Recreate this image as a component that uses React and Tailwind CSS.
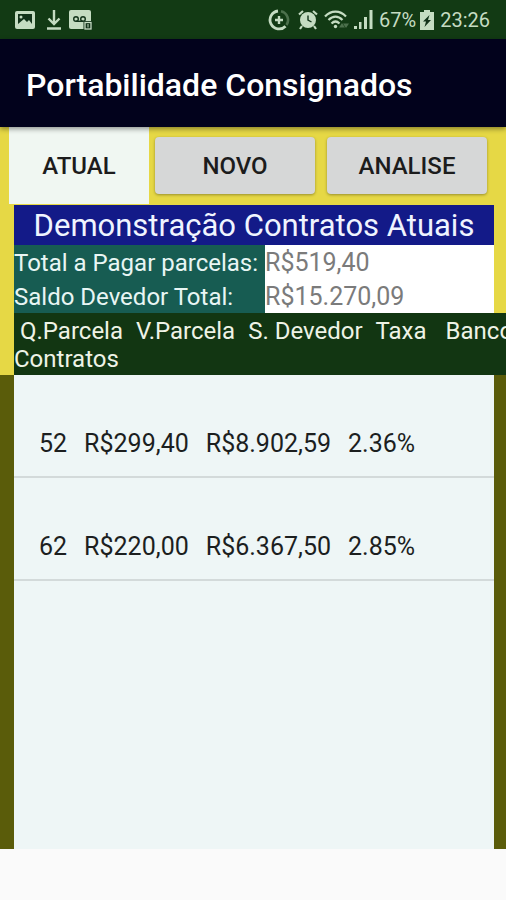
const contracts = [
  { id: 1, quantity: "52", installment: "R$299,40", balance: "R$8.902,59", rate: "2.36%" },
  { id: 2, quantity: "62", installment: "R$220,00", balance: "R$6.367,50", rate: "2.85%" },
]

const totals = [
  { label: "Total a Pagar parcelas:", value: "R$519,40" },
  { label: "Saldo Devedor Total:", value: "R$15.270,09" },
]

const PictureIcon = () => (
  <svg width="20" height="20" viewBox="0 0 20 20" aria-hidden="true">
    <rect x="0" y="1" width="20" height="18" rx="2" fill="#c5dcc2" />
    <path d="M3 4h14v10l-3-4-2 2-3-3-6 5z" fill="#12331a" />
    <circle cx="6" cy="7" r="1.5" fill="#c5dcc2" />
  </svg>
)

const DownloadIcon = () => (
  <svg width="14" height="20" viewBox="0 0 14 20" fill="none" stroke="#c5dcc2" strokeWidth="2.4" aria-hidden="true">
    <path d="M7 0v14M1.5 8.5 7 14l5.5-5.5M0 18.5h14" />
  </svg>
)

const VoicemailIcon = () => (
  <svg width="24" height="20" viewBox="0 0 24 20" aria-hidden="true">
    <rect x="0" y="0" width="22" height="19" rx="2" fill="#c5dcc2" />
    <g fill="none" stroke="#12331a" strokeWidth="1.4">
      <circle cx="7" cy="9" r="2.3" />
      <circle cx="14" cy="9" r="2.3" />
      <path d="M7 11.3h7" />
    </g>
    <rect x="14.5" y="11" width="9" height="9" rx="1" fill="#12331a" />
    <rect x="16" y="12.5" width="6" height="6.5" fill="none" stroke="#c5dcc2" strokeWidth="1.3" />
    <path d="M19 14v3.5" stroke="#c5dcc2" />
  </svg>
)

const DataSaverIcon = () => (
  <svg width="22" height="22" viewBox="0 0 22 22" fill="none" aria-hidden="true">
    <path d="M13 2.2A9 9 0 0 1 18.5 16" stroke="#4c704c" strokeWidth="2.6" />
    <path d="M10 2A9 9 0 1 0 17.5 17.2" stroke="#c5dcc2" strokeWidth="2.8" />
    <path d="M11 7v8M7 11h8" stroke="#c5dcc2" strokeWidth="2.4" />
  </svg>
)

const AlarmIcon = () => (
  <svg width="20" height="21" viewBox="0 0 20 21" fill="none" aria-hidden="true">
    <circle cx="10" cy="11" r="8" fill="#c5dcc2" />
    <path d="M1 5.5 5 2M19 5.5 15 2M4 17l-2 3M16 17l2 3" stroke="#c5dcc2" strokeWidth="2.2" />
    <path d="M10 6.5V11l3.5 2" stroke="#12331a" strokeWidth="1.4" />
  </svg>
)

const WifiIcon = () => (
  <svg width="26" height="20" viewBox="0 0 26 20" fill="none" aria-hidden="true">
    <g stroke="#c5dcc2" strokeWidth="2.2">
      <path d="M1 6.5C7 0 16 0 22 6.5" />
      <path d="M4.5 10C9 5.5 14 5.5 18.5 10" />
      <path d="M7.5 13.5c2.500-2.500 5.500-2.500 8 0" />
    </g>
    <circle cx="11.5" cy="16.5" r="1.7" fill="#c5dcc2" />
    <path d="M15 17.5 18 13l3 4.500zM19 13.500h6l-3 4.500z" fill="#4c704c" />
  </svg>
)

const SignalIcon = () => (
  <svg width="19" height="19" viewBox="0 0 19 19" fill="#c5dcc2" aria-hidden="true">
    <rect x="0" y="16" width="3" height="3" />
    <rect x="5" y="12" width="2.5" height="7" />
    <rect x="10" y="7" width="3" height="12" />
    <rect x="15.5" y="0" width="3" height="19" />
  </svg>
)

const BatteryIcon = () => (
  <svg width="14" height="20" viewBox="0 0 14 20" aria-hidden="true">
    <path d="M4 0h6v2h4v18H0V2h4z" fill="#c5dcc2" />
    <path d="M9.5 5 3 11.500h3L4.500 17 11 10H8z" fill="#12331a" />
  </svg>
)

const StatusBar = () => (
  <div className="flex h-[39px] items-center justify-between bg-[#123a14] pl-[15px] pr-4 text-[#c5dcc2]">
    <div className="flex items-center gap-3">
      <PictureIcon />
      <DownloadIcon />
      <div className="-ml-1">
        <VoicemailIcon />
      </div>
    </div>
    <div className="flex items-center text-xl">
      <DataSaverIcon />
      <span className="ml-2"><AlarmIcon /></span>
      <span className="ml-1.5"><WifiIcon /></span>
      <span className="ml-1"><SignalIcon /></span>
      <span className="ml-1.5">67%</span>
      <span className="ml-1"><BatteryIcon /></span>
      <span className="ml-1.5">23:26</span>
    </div>
  </div>
)

const TabButton = ({ children }) => (
  <button
    type="button"
    className="my-2.5 h-[57px] flex-1 rounded-sm bg-[#d6d7d7] text-2xl font-medium text-[#1c1c1c] shadow-[0_1px_3px_rgba(0,0,0,0.35)]"
  >
    {children}
  </button>
)

const ContractRow = ({ contract }) => (
  <tr className="flex h-[103px] items-end gap-[17px] border-b-2 border-[#d3dada] pb-3.5 pl-[25px]">
    <td>{contract.quantity}</td>
    <td>{contract.installment}</td>
    <td>{contract.balance}</td>
    <td>{contract.rate}</td>
  </tr>
)

export default function App() {
  return (
    <div className="flex min-h-screen flex-col overflow-x-hidden bg-[#fafafa] font-[Roboto,sans-serif]">
      <StatusBar />
      <header className="relative flex h-[88px] items-center bg-[#02021c] px-[26px] pt-1 shadow-[0_2px_5px_rgba(0,0,0,0.4)]">
        <h1 className="text-[32px] font-medium text-white">Portabilidade Consignados</h1>
      </header>

      <main className="flex flex-1 flex-col">
        <div className="bg-[#e6d845]">
          <nav className="flex pl-[9px] pr-[19px]">
            <button type="button" className="w-[140px] bg-[#f0f7f2] text-2xl font-medium text-[#1c1c1c]">
              ATUAL
            </button>
            <div className="ml-1.5 flex flex-1 gap-3">
              <TabButton>NOVO</TabButton>
              <TabButton>ANALISE</TabButton>
            </div>
          </nav>

          <section className="ml-3.5 mr-3">
            <h2 className="mt-px h-10 whitespace-nowrap bg-[#131a88] text-center text-[31px] leading-[42px] text-[#f0f4ff]">
              Demonstração Contratos Atuais
            </h2>
            <dl className="leading-9">
              {totals.map((total) => (
                <div key={total.label} className="flex h-[34px] bg-white">
                  <dt className="w-[251px] whitespace-nowrap bg-[#175c52] text-2xl leading-9 text-[#e8f6f4]">
                    {total.label}
                  </dt>
                  <dd className="text-[25px] text-[#7b7b7b]">{total.value}</dd>
                </div>
              ))}
            </dl>
          </section>
        </div>

        <table className="flex flex-1 flex-col">
          <thead className="block bg-[#e6d845] pl-3.5 text-2xl leading-7">
            <tr className="flex gap-[13px] whitespace-nowrap bg-[#123612] pl-1.5 pt-1 text-[#eef3e6] *:font-normal">
              <th>Q.Parcela</th>
              <th>V.Parcela</th>
              <th>S. Devedor</th>
              <th>Taxa</th>
              <th className="pl-1.5">Banco</th>
            </tr>
            <tr className="flex bg-[#123612] pb-0.5 text-[#eef3e6]">
              <th className="font-normal">Contratos</th>
            </tr>
          </thead>
          <tbody className="flex flex-1 flex-col border-l-14 border-r-12 border-[#5a5c0a] bg-[#eef6f6] text-[25px] text-[#1c1f1f]">
            {contracts.map((contract) => (
              <ContractRow key={contract.id} contract={contract} />
            ))}
          </tbody>
        </table>
      </main>

      <footer className="h-[51px]" />
    </div>
  )
}
